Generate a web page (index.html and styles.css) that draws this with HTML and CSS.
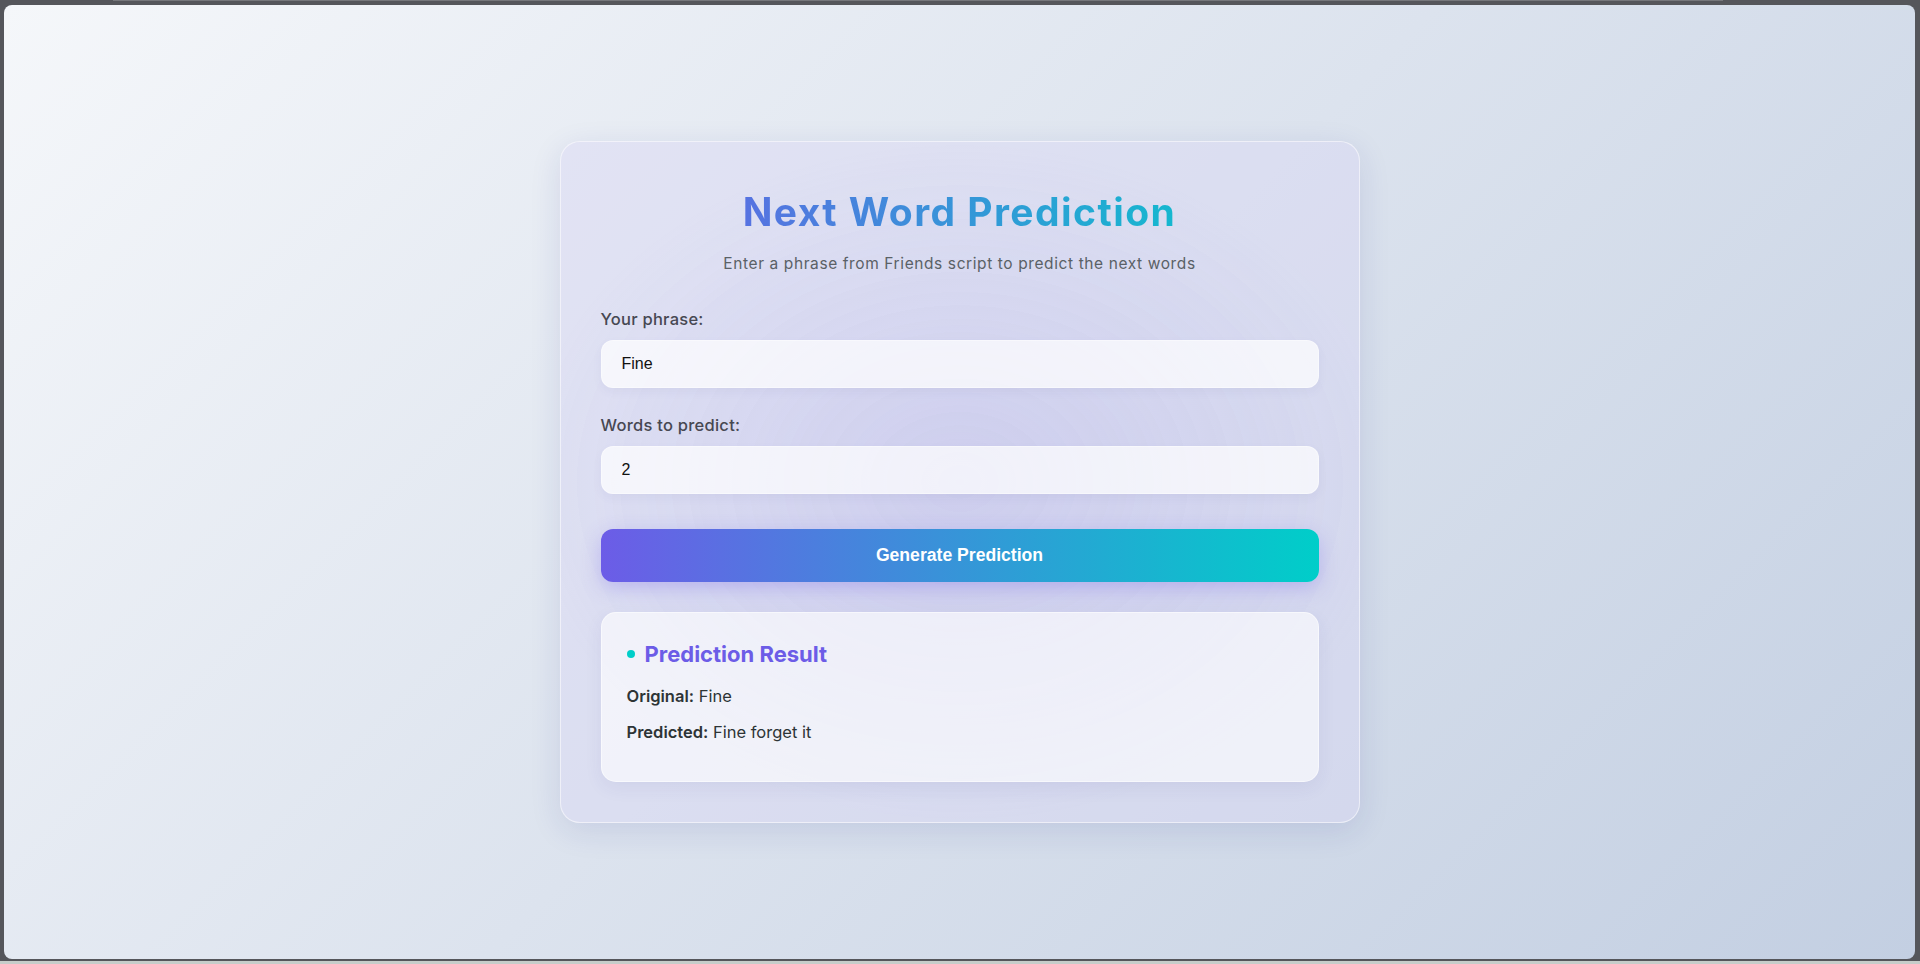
FILE: index.html
```html
<!DOCTYPE html>
<html lang="en">
<head>
<meta charset="utf-8">
<title>Next Word Prediction</title>
<link rel="stylesheet" href="styles.css">
</head>
<body>
<div class="topbar"></div>
<div class="frame">
  <main class="card">
    <h1 class="title">Next Word Prediction</h1>
    <p class="subtitle">Enter a phrase from Friends script to predict the next words</p>
    <form class="form">
      <div class="group">
        <label class="label" for="phrase">Your phrase:</label>
        <input class="field" id="phrase" type="text" value="Fine">
      </div>
      <div class="group">
        <label class="label" for="count">Words to predict:</label>
        <input class="field" id="count" type="text" value="2">
      </div>
      <button class="btn" type="button">Generate Prediction</button>
    </form>
    <section class="result">
      <h3 class="result-title"><span class="dot"></span>Prediction Result</h3>
      <p class="result-line"><strong>Original:</strong> Fine</p>
      <p class="result-line"><strong>Predicted:</strong> Fine forget it</p>
    </section>
  </main>
</div>
<div class="bottombar"></div>
</body>
</html>
```
FILE: styles.css
```css
* { box-sizing: border-box; }
html, body { margin: 0; padding: 0; }
body {
  background: #55565b;
  height: 964px;
  overflow: hidden;
  font-family: "Inter", "Noto Sans", sans-serif;
}
.topbar {
  height: 1px;
  margin-left: 113px;
  width: 1610px;
  background: #76777b;
}
.frame {
  margin: 4px 5px 0 4px;
  height: 954px;
  border-radius: 8px;
  background: linear-gradient(135deg, #f5f7fa 0%, #c3cfe2 100%);
  display: flex;
  align-items: center;
  justify-content: center;
}
.bottombar {
  margin-top: 2px;
  height: 3px;
  background: #c6cdca;
}
.card {
  width: 800px;
  padding: 40px;
  border-radius: 20px;
  border: 1px solid rgba(255, 255, 255, 0.55);
  background:
    radial-gradient(ellipse 55% 50% at 50% 50%, rgba(150, 140, 225, 0.2), rgba(150, 140, 225, 0) 100%),
    rgba(218, 216, 244, 0.45);
  box-shadow: 0 8px 32px rgba(31, 38, 135, 0.11);
}
.title {
  margin: 0 0 11px;
  font-size: 39px;
  line-height: 59px;
  letter-spacing: 1.45px;
  font-weight: 700;
  text-align: center;
  background: linear-gradient(90deg, #6c5ce7 0%, #00cec9 100%);
  -webkit-background-clip: text;
  background-clip: text;
  color: transparent;
}
.subtitle {
  margin: 0 0 31px;
  font-size: 15.5px;
  line-height: 24px;
  letter-spacing: 0.6px;
  text-align: center;
  color: #5a6166;
}
.form { margin: 0; }
.group { margin-bottom: 25px; }
.label {
  display: block;
  margin-bottom: 9px;
  font-size: 16.5px;
  line-height: 24px;
  letter-spacing: 0.25px;
  font-weight: 500;
  color: #474852;
}
.field {
  display: block;
  width: 100%;
  height: 48px;
  padding: 0 20px;
  border: 1px solid rgba(255, 255, 255, 0.4);
  border-radius: 12px;
  background: rgba(255, 255, 255, 0.72);
  box-shadow: 0 4px 10px rgba(80, 80, 160, 0.06);
  font-family: "Liberation Sans", Arial, sans-serif;
  font-size: 16px;
  color: #111;
  outline: none;
}
.btn {
  display: block;
  width: 100%;
  height: 53px;
  margin-top: 35px;
  border: 0;
  border-radius: 12px;
  background: linear-gradient(90deg, #6c5ce7 0%, #00cec9 100%);
  box-shadow: 0 6px 20px rgba(108, 92, 231, 0.3);
  color: #fff;
  font-family: "Liberation Sans", Arial, sans-serif;
  font-size: 17.6px;
  font-weight: 700;
  cursor: pointer;
}
.result {
  margin-top: 30px;
  height: 170px;
  padding: 25px 25px 26px;
  border-radius: 15px;
  border: 1px solid rgba(255, 255, 255, 0.5);
  background: rgba(255, 255, 255, 0.62);
  box-shadow: 0 6px 18px rgba(60, 60, 140, 0.07);
}
.result-title {
  display: flex;
  align-items: center;
  margin: 0 0 14px;
  font-size: 22px;
  line-height: 32px;
  font-weight: 700;
  color: #6c5ce7;
}
.dot {
  width: 8px;
  height: 8px;
  border-radius: 50%;
  background: #00cec9;
  margin-right: 10px;
  flex: none;
}
.result-line {
  margin: 0 0 10px;
  font-size: 16.5px;
  line-height: 25.6px;
  color: #2d3436;
}
.result-line strong { font-weight: 600; }
```
